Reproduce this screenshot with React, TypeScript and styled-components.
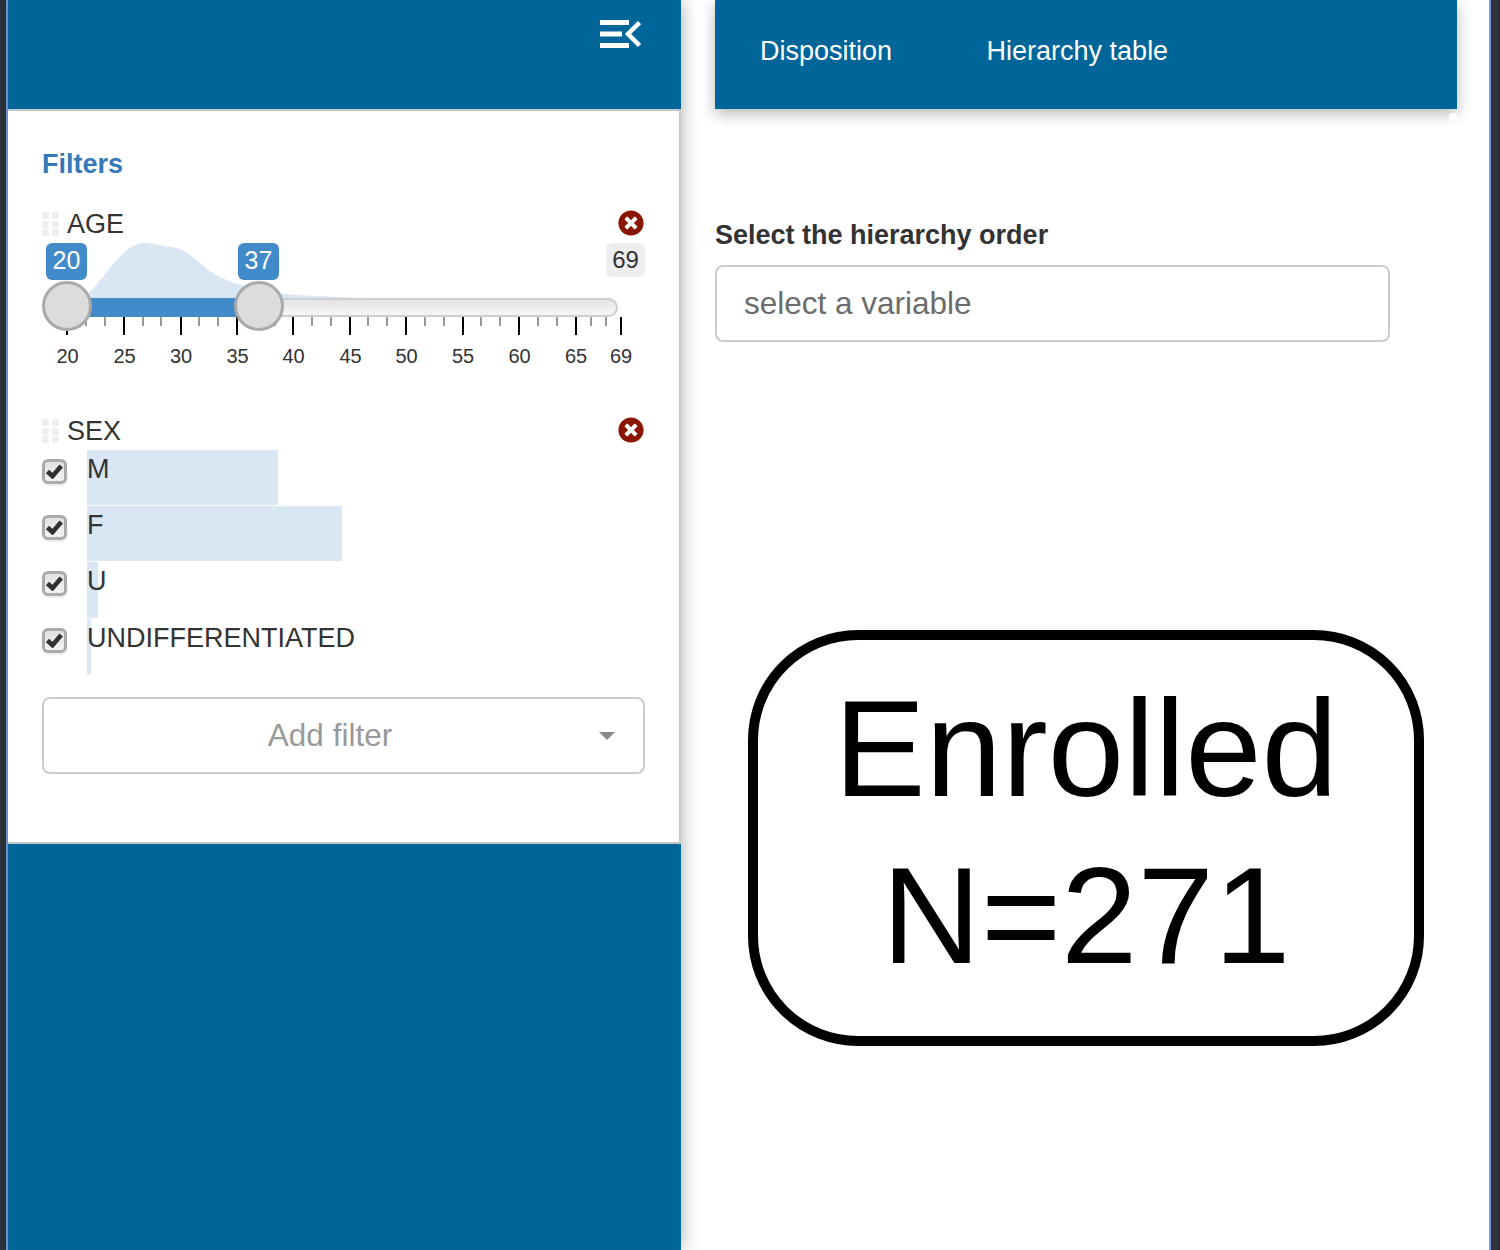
import React from 'react';
import styled, { createGlobalStyle } from 'styled-components';
import { FaTimesCircle } from 'react-icons/fa';

const GlobalStyle = createGlobalStyle`
  html, body {
    margin: 0;
    padding: 0;
    background: #fff;
    overflow: hidden;
  }
  * {
    box-sizing: border-box;
  }
`;

const BLUE = '#006699';
const SLIDER_BLUE = '#428bca';
const DENSITY = '#d9e6f3';

const Page = styled.div`
  display: flex;
  width: 1500px;
  height: 1250px;
  font-family: 'Liberation Sans', Arial, sans-serif;
  color: #333;
  overflow: hidden;
`;

const WindowEdge = styled.div<{ side: 'left' | 'right' }>`
  flex: none;
  width: ${({ side }) => (side === 'left' ? '8px' : '11px')};
  background: #2d323e;
  border-${({ side }) => (side === 'left' ? 'right' : 'left')}: 2px solid #7a9fd8;
  border-right-color: ${({ side }) => (side === 'left' ? '#7a9fd8' : '#16282f')};
  border-right-style: solid;
  border-right-width: ${({ side }) => (side === 'left' ? '2px' : '1px')};
`;

const Sidebar = styled.aside`
  flex: none;
  position: relative;
  z-index: 1;
  width: 673px;
  background: ${BLUE};
  box-shadow: 2px 0 16px rgba(0, 0, 0, 0.28);
`;

const SidebarHeader = styled.div`
  display: flex;
  justify-content: flex-end;
  height: 109px;
  padding: 19px 40px 0 0;
`;

const Panel = styled.div`
  width: 673px;
  height: 735px;
  padding: 35px 34px 0 34px;
  background: #fff;
  border-top: 2px solid #c4c8ca;
  border-bottom: 2px solid #c4c8ca;
  border-right: 2px solid #c8c8c8;
`;

const PanelTitle = styled.h3`
  margin: 0 0 24px;
  font-size: 27px;
  line-height: 36px;
  font-weight: 700;
  color: #337ab7;
`;

const FilterHead = styled.div`
  display: flex;
  align-items: center;
  height: 36px;
  font-size: 27px;
  color: #333;
`;

const Grip = styled.div`
  display: grid;
  grid-template-columns: 7px 7px;
  grid-auto-rows: 7px;
  gap: 1.5px 3px;
  margin-right: 8px;
  span {
    border-radius: 2px;
    background: #eee;
  }
`;

const FilterName = styled.span`
  flex: 1;
`;

const RemoveIcon = styled(FaTimesCircle)`
  width: 26px;
  height: 26px;
  margin: -2px 1px 0 0;
  color: #8b1600;
`;

const Slider = styled.div`
  position: relative;
  height: 128px;
  margin: 1px 0 42px;
`;

const Track = styled.div`
  position: absolute;
  left: 25px;
  top: 55px;
  width: 551px;
  height: 19px;
  border: 2px solid #cfcfcf;
  border-radius: 0 10px 10px 0;
  background: linear-gradient(#e4e4e4, #f6f6f6);
`;

const TrackFill = styled.div`
  position: absolute;
  left: 25px;
  top: 55px;
  width: 192px;
  height: 19px;
  background: ${SLIDER_BLUE};
`;

const DensityPlot = styled.svg`
  position: absolute;
  left: 0;
  top: 0;
  width: 400px;
  height: 60px;
`;

const Handle = styled.div<{ x: number }>`
  position: absolute;
  left: ${({ x }) => x}px;
  top: 38px;
  width: 50px;
  height: 50px;
  border: 3px solid #aaa;
  border-radius: 50%;
  background: #dcdcdc;
`;

const ValueChip = styled.div<{ x: number; muted?: boolean }>`
  position: absolute;
  left: ${({ x }) => x}px;
  top: 0;
  width: ${({ muted }) => (muted ? '39px' : '41px')};
  height: ${({ muted }) => (muted ? '34px' : '37px')};
  border-radius: 6px;
  font-size: ${({ muted }) => (muted ? '24px' : '25px')};
  line-height: 34px;
  text-align: center;
  color: ${({ muted }) => (muted ? '#333' : '#fff')};
  background: ${({ muted }) => (muted ? '#eee' : SLIDER_BLUE)};
`;

const Tick = styled.div<{ x: number; major?: boolean }>`
  position: absolute;
  left: ${({ x }) => x}px;
  top: 74px;
  width: 2px;
  height: ${({ major }) => (major ? '18px' : '9px')};
  background: ${({ major }) => (major ? '#000' : '#999')};
`;

const TickLabel = styled.span<{ x: number }>`
  position: absolute;
  left: ${({ x }) => x}px;
  top: 102px;
  font-size: 20px;
  line-height: 23px;
  transform: translateX(-50%);
  color: #333;
`;

const CheckList = styled.div`
  margin-top: 1px;
`;

const CheckRow = styled.div`
  position: relative;
  display: flex;
  height: 56.2px;
`;

const CheckBox = styled.div`
  flex: none;
  display: flex;
  align-items: center;
  justify-content: center;
  width: 25px;
  height: 25px;
  margin: 9px 20px 0 0;
  border: 3px solid #aaa;
  border-radius: 6px;
  background: linear-gradient(#e2e2e2, #f4f4f4);
  box-shadow: 0 2px 2px rgba(0, 0, 0, 0.08);
`;

const CheckLabel = styled.span`
  position: relative;
  font-size: 27px;
  line-height: 38px;
`;

const CountBar = styled.div`
  position: absolute;
  left: 45px;
  top: 0;
  bottom: 1px;
  background: ${DENSITY};
`;

const AddFilter = styled.div`
  position: relative;
  display: flex;
  align-items: center;
  justify-content: center;
  width: 603px;
  height: 77px;
  margin-top: 22px;
  padding-right: 27px;
  border: 2px solid #ccc;
  border-radius: 8px;
  background: #fff;
  font-size: 31.5px;
  color: #999;
`;

const Caret = styled.span`
  position: absolute;
  right: 28px;
  top: 33px;
  border-style: solid;
  border-width: 8px 8px 0;
  border-color: #888 transparent transparent;
`;

const Main = styled.main`
  flex: 1;
  position: relative;
  padding: 0 32px 0 34px;
  background: #fff;
`;

const TabBar = styled.nav`
  display: flex;
  gap: 94.5px;
  height: 109px;
  padding: 35px 45px 0;
  background: ${BLUE};
  box-shadow: 0 5px 14px rgba(0, 0, 0, 0.28);
`;

const Tab = styled.a`
  font-size: 27px;
  line-height: 32px;
  color: #fff;
`;

const Dot = styled.span`
  position: absolute;
  left: 768px;
  top: 113px;
  width: 8px;
  height: 8px;
  border-radius: 50%;
  background: #fff;
`;

const FieldLabel = styled.label`
  display: block;
  margin-top: 109px;
  font-size: 27px;
  line-height: 34px;
  font-weight: 700;
  color: #333;
`;

const SelectBox = styled.div`
  display: flex;
  align-items: center;
  width: 675px;
  height: 77px;
  margin-top: 13px;
  padding-left: 27px;
  border: 2px solid #ccc;
  border-radius: 8px;
  font-size: 31.5px;
  color: #6c6c6c;
`;

const FlowNode = styled.div`
  display: flex;
  flex-direction: column;
  align-items: center;
  justify-content: center;
  width: 676px;
  height: 416px;
  margin: 288px 0 0 33px;
  padding-bottom: 12px;
  border: 10px solid #000;
  border-radius: 110px;
  font-size: 137.4px;
  line-height: 167px;
  color: #000;
`;

const MenuCollapseIcon = () => (
  <svg width="41" height="30" viewBox="0 0 41 30" fill="none" stroke="#fff">
    <path d="M0 3.5h29M0 15h22M0 26.500h29" strokeWidth="5" />
    <path d="M39.500 3.500L28 15l11.500 11.500" strokeWidth="4.500" />
  </svg>
);

const CheckMark = () => (
  <svg width="17" height="15" viewBox="0 0 17 15" fill="none" stroke="#333">
    <path d="M1.500 7.500L6.500 12.200L15.200 2" strokeWidth="4.600" />
  </svg>
);

const majorTicks = [
  { value: 20, x: 24 },
  { value: 25, x: 81 },
  { value: 30, x: 137.5 },
  { value: 35, x: 194 },
  { value: 40, x: 250 },
  { value: 45, x: 307 },
  { value: 50, x: 363 },
  { value: 55, x: 419.5 },
  { value: 60, x: 476 },
  { value: 65, x: 532.5 },
];

const minorTicks = [
  43, 62, 100, 118, 156, 175, 213, 232, 269, 288, 325, 344, 382, 401, 438,
  457, 495, 514, 548, 563,
];

const sexLevels = [
  { label: 'M', width: 191 },
  { label: 'F', width: 255 },
  { label: 'U', width: 11 },
  { label: 'UNDIFFERENTIATED', width: 4 },
];

const GripDots = () => (
  <Grip>
    {[0, 1, 2, 3, 4, 5].map((i) => (
      <span key={i} />
    ))}
  </Grip>
);

const AgeSlider = () => (
  <Slider>
    <DensityPlot viewBox="0 0 400 60">
      <path
        d="M40 56 C62 40 78 0 103 0 C112 0 118 3 130 4 C148 6 158 24 178 34 C188 39 198 42 215 47 C240 53 300 54 345 55.500 L345 57 L40 57 Z"
        fill={DENSITY}
      />
    </DensityPlot>
    <Track />
    <TrackFill />
    {minorTicks.map((x) => (
      <Tick key={x} x={x} />
    ))}
    {majorTicks.map((tick) => (
      <Tick key={tick.value} x={tick.x} major />
    ))}
    <Tick x={578} major />
    {majorTicks.map((tick) => (
      <TickLabel key={tick.value} x={tick.x + 1.5}>
        {tick.value}
      </TickLabel>
    ))}
    <TickLabel x={579}>69</TickLabel>
    <Handle x={0} />
    <Handle x={192} />
    <ValueChip x={4}>20</ValueChip>
    <ValueChip x={196}>37</ValueChip>
    <ValueChip x={564} muted>
      69
    </ValueChip>
  </Slider>
);

export default function App() {
  return (
    <Page>
      <GlobalStyle />
      <WindowEdge side="left" />
      <Sidebar>
        <SidebarHeader>
          <MenuCollapseIcon />
        </SidebarHeader>
        <Panel>
          <PanelTitle>Filters</PanelTitle>
          <FilterHead>
            <GripDots />
            <FilterName>AGE</FilterName>
            <RemoveIcon />
          </FilterHead>
          <AgeSlider />
          <FilterHead>
            <GripDots />
            <FilterName>SEX</FilterName>
            <RemoveIcon />
          </FilterHead>
          <CheckList>
            {sexLevels.map((level) => (
              <CheckRow key={level.label}>
                <CountBar style={{ width: level.width }} />
                <CheckBox>
                  <CheckMark />
                </CheckBox>
                <CheckLabel>{level.label}</CheckLabel>
              </CheckRow>
            ))}
          </CheckList>
          <AddFilter>
            Add filter
            <Caret />
          </AddFilter>
        </Panel>
      </Sidebar>
      <Main>
        <TabBar>
          <Tab>Disposition</Tab>
          <Tab>Hierarchy table</Tab>
        </TabBar>
        <Dot />
        <FieldLabel>Select the hierarchy order</FieldLabel>
        <SelectBox>select a variable</SelectBox>
        <FlowNode>
          <span>Enrolled</span>
          <span>N=271</span>
        </FlowNode>
      </Main>
      <WindowEdge side="right" />
    </Page>
  );
}
